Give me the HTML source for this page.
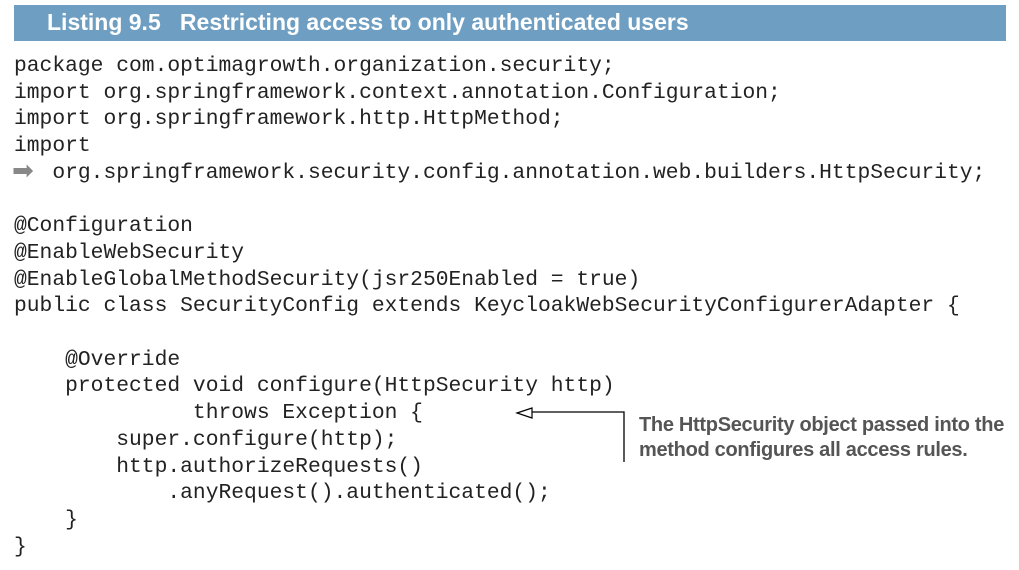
<!DOCTYPE html>
<html><head><style>
body{margin:0;background:#fff;width:1019px;height:570px;position:relative;overflow:hidden}
.bar{position:absolute;left:14px;top:5px;width:992px;height:36px;background:#6e9fc3}
.bar span{position:absolute;left:33px;top:4px;color:#fff;font:bold 23px "Liberation Sans",sans-serif;white-space:pre}
pre{position:absolute;left:14px;top:53px;margin:0;font:21.3px/26.7px "Liberation Mono",monospace;color:#222}
.note{position:absolute;left:639px;top:413px;font:bold 20px/25px "Liberation Sans Narrow","Liberation Sans",sans-serif;color:#555;letter-spacing:-0.3px}
.ar{position:absolute;left:12px;top:156px;color:#888;font:26px "DejaVu Sans",sans-serif}
</style></head><body>
<div class="bar"><span>Listing 9.5   Restricting access to only authenticated users</span></div>
<pre>package com.optimagrowth.organization.security;
import org.springframework.context.annotation.Configuration;
import org.springframework.http.HttpMethod;
import
   org.springframework.security.config.annotation.web.builders.HttpSecurity;

@Configuration
@EnableWebSecurity
@EnableGlobalMethodSecurity(jsr250Enabled = true)
public class SecurityConfig extends KeycloakWebSecurityConfigurerAdapter {

    @Override
    protected void configure(HttpSecurity http)
              throws Exception {
        super.configure(http);
        http.authorizeRequests()
            .anyRequest().authenticated();
    }
}</pre>
<div class="ar">➡</div>
<svg style="position:absolute;left:0;top:0" width="1019" height="570">
<polyline points="532,412 624,412 624,462" fill="none" stroke="#000" stroke-width="1.3"/>
<polygon points="517,413 532,408 532,418" fill="#fff" stroke="#000" stroke-width="1.2"/>
</svg>
<div class="note">The HttpSecurity object passed into the<br>method configures all access rules.</div>
</body></html>
